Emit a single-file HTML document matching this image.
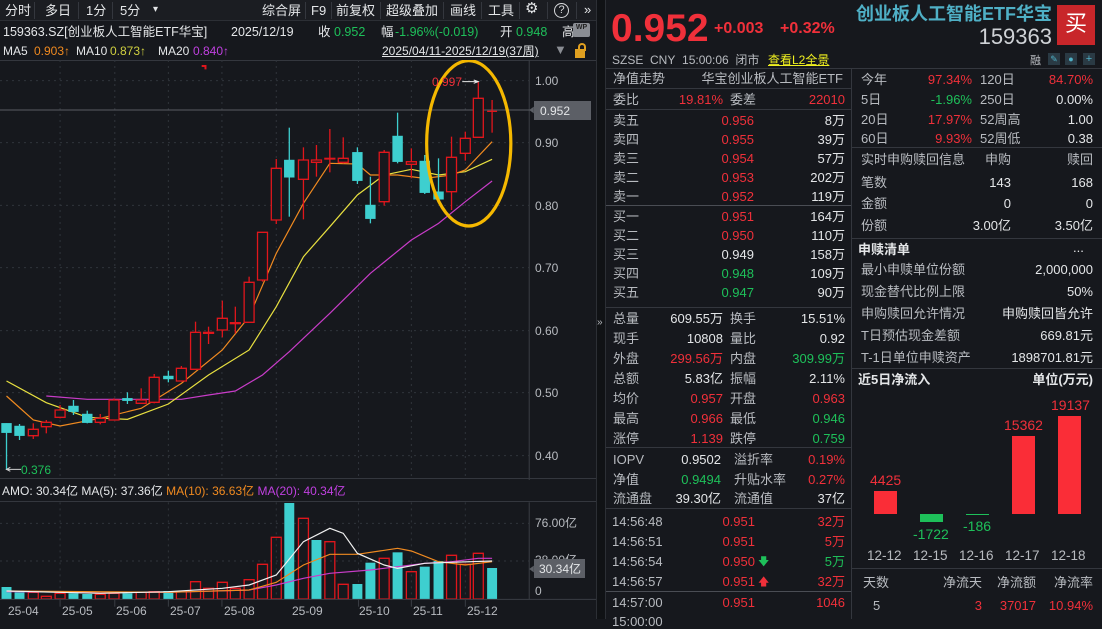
<!DOCTYPE html>
<html><head><meta charset="utf-8"><style>
*{margin:0;padding:0;box-sizing:border-box}
body{width:1102px;height:619px;background:#16181d;overflow:hidden;position:relative;font-family:"Liberation Sans","Noto Sans CJK SC",sans-serif;color:#d8dadd}
.t{position:absolute;white-space:nowrap;font-size:13px;line-height:14px}
.r{color:#f0303a}.g{color:#1ec05a}.w{color:#e4e6e8}.gy{color:#b8bbc0}
.hl{position:absolute;height:1px;background:#34373e}
.vl{position:absolute;width:1px;background:#34373e}
</style></head><body>
<!-- top toolbar -->
<div style="position:absolute;left:0;top:0;width:600px;height:21px;background:#1b1d22;border-bottom:1px solid #2c2f35"></div>
<div class="t w" style="left:5px;top:4px">分时</div>
<div class="vl" style="left:34px;top:2px;height:17px"></div>
<div class="t w" style="left:45px;top:4px">多日</div>
<div class="vl" style="left:78px;top:2px;height:17px"></div>
<div class="t w" style="left:86px;top:4px">1分</div>
<div class="vl" style="left:112px;top:2px;height:17px"></div>
<div class="t w" style="left:120px;top:4px">5分</div>
<div class="t w" style="left:153px;top:3px;font-size:10px">▾</div>
<div class="t w" style="left:262px;top:4px">综合屏</div>
<div class="vl" style="left:305px;top:2px;height:17px"></div>
<div class="t w" style="left:311px;top:4px">F9</div>
<div class="vl" style="left:331px;top:2px;height:17px"></div>
<div class="t w" style="left:336px;top:4px">前复权</div>
<div class="vl" style="left:380px;top:2px;height:17px"></div>
<div class="t w" style="left:386px;top:4px">超级叠加</div>
<div class="vl" style="left:443px;top:2px;height:17px"></div>
<div class="t w" style="left:450px;top:4px">画线</div>
<div class="vl" style="left:481px;top:2px;height:17px"></div>
<div class="t w" style="left:488px;top:4px">工具</div>
<div class="vl" style="left:519px;top:2px;height:17px"></div>
<div class="t w" style="left:525px;top:2px;font-size:15px">⚙</div>
<div class="vl" style="left:547px;top:2px;height:17px"></div>
<div style="position:absolute;left:554px;top:3px;width:15px;height:15px;border:1.3px solid #d8dadd;border-radius:50%;font-size:11px;text-align:center;line-height:13px">?</div>
<div class="vl" style="left:576px;top:2px;height:17px"></div>
<div class="t w" style="left:584px;top:3px">»</div>
<!-- row 2 -->
<div class="t w" style="left:3px;top:25px;font-size:12.5px">159363.SZ[创业板人工智能ETF华宝]</div>
<div class="t w" style="left:231px;top:25px;font-size:12.5px">2025/12/19</div>
<div class="t w" style="left:318px;top:25px;font-size:12.5px">收</div>
<div class="t g" style="left:334px;top:25px;font-size:12.5px">0.952</div>
<div class="t w" style="left:381px;top:25px;font-size:12.5px">幅</div>
<div class="t g" style="left:395px;top:25px;font-size:12.5px">-1.96%(-0.019)</div>
<div class="t w" style="left:500px;top:25px;font-size:12.5px">开</div>
<div class="t g" style="left:516px;top:25px;font-size:12.5px">0.948</div>
<div class="t w" style="left:562px;top:25px;font-size:12.5px">高</div>
<div style="position:absolute;left:573px;top:23px;width:17px;height:14px;background:#8a8d93;border-radius:2px;font-size:7px;color:#222;text-align:center;line-height:10px;font-weight:bold">WP</div>
<!-- row 3 -->
<div class="t w" style="left:3px;top:44px;font-size:12px">MA5</div>
<div class="t" style="left:34px;top:44px;font-size:12px;color:#f08a20">0.903↑</div>
<div class="t w" style="left:76px;top:44px;font-size:12px">MA10</div>
<div class="t" style="left:110px;top:44px;font-size:12px;color:#d0d040">0.873↑</div>
<div class="t w" style="left:158px;top:44px;font-size:12px">MA20</div>
<div class="t" style="left:193px;top:44px;font-size:12px;color:#c040e0">0.840↑</div>
<div class="t w" style="left:382px;top:44px;font-size:12px;text-decoration:underline">2025/04/11-2025/12/19(37周)</div>
<div class="t" style="left:554px;top:43px;font-size:13px;color:#8a8d93">▼</div>
<div style="position:absolute;left:575px;top:49px;width:10px;height:9px;background:#e0a020"></div>
<div style="position:absolute;left:578px;top:43px;width:8px;height:8px;border:2px solid #e0a020;border-bottom:none;border-radius:4px 4px 0 0"></div>
<div class="hl" style="left:0;top:60px;width:596px"></div>

<!-- main chart -->
<svg style="position:absolute;left:0;top:60px" width="600" height="420" viewBox="0 0 1568 1260" preserveAspectRatio="none">
<g stroke="#30343b" stroke-dasharray="2 4" vector-effect="non-scaling-stroke" stroke-width="1">
<line x1="0" x2="1383" y1="62" y2="62" vector-effect="non-scaling-stroke"/><line x1="0" x2="1383" y1="248" y2="248" vector-effect="non-scaling-stroke"/><line x1="0" x2="1383" y1="436" y2="436" vector-effect="non-scaling-stroke"/><line x1="0" x2="1383" y1="623" y2="623" vector-effect="non-scaling-stroke"/><line x1="0" x2="1383" y1="812" y2="812" vector-effect="non-scaling-stroke"/><line x1="0" x2="1383" y1="998" y2="998" vector-effect="non-scaling-stroke"/><line x1="0" x2="1383" y1="1187" y2="1187" vector-effect="non-scaling-stroke"/>
<line y1="0" y2="1260" x1="157" x2="157" vector-effect="non-scaling-stroke"/><line y1="0" y2="1260" x1="300" x2="300" vector-effect="non-scaling-stroke"/><line y1="0" y2="1260" x1="440" x2="440" vector-effect="non-scaling-stroke"/><line y1="0" y2="1260" x1="580" x2="580" vector-effect="non-scaling-stroke"/><line y1="0" y2="1260" x1="722" x2="722" vector-effect="non-scaling-stroke"/><line y1="0" y2="1260" x1="937" x2="937" vector-effect="non-scaling-stroke"/><line y1="0" y2="1260" x1="1075" x2="1075" vector-effect="non-scaling-stroke"/><line y1="0" y2="1260" x1="1216" x2="1216" vector-effect="non-scaling-stroke"/>
</g>
<line x1="1383" x2="1383" y1="0" y2="1260" stroke="#3a3d44" vector-effect="non-scaling-stroke"/>
<line x1="0" x2="1390" y1="150" y2="150" stroke="#5a5d63" vector-effect="non-scaling-stroke"/>
<g fill="none" stroke-width="1.2">
<polyline vector-effect="non-scaling-stroke" stroke="#c83cc8" points="121,1008 228,1018 403,1018 474,1018 545,1005 615,993 686,945 756,875 862,760 968,640 1075,540 1146,490 1216,425 1286,363"/>
<polyline vector-effect="non-scaling-stroke" stroke="#e8e040" points="17,963 121,1028 228,1072 333,1078 440,1032 545,945 651,870 722,740 793,590 862,500 934,405 1004,345 1075,328 1146,345 1216,335 1286,298"/>
<polyline vector-effect="non-scaling-stroke" stroke="#f08a20" points="17,1008 87,1080 157,1098 262,1075 369,1045 474,970 581,870 651,770 722,580 793,430 862,310 934,312 968,345 1039,345 1110,355 1180,345 1216,330 1286,245"/>
</g>
<g stroke-width="1.3">
<!-- candles: wick then body -->
<g stroke="#3ecfcf" fill="#3ecfcf">
<line vector-effect="non-scaling-stroke" x1="17" x2="17" y1="1090" y2="1230"/><rect x="4" y="1090" width="26" height="28"/>
<line vector-effect="non-scaling-stroke" x1="51" x2="51" y1="1092" y2="1140"/><rect x="38" y="1098" width="26" height="29"/>
<line vector-effect="non-scaling-stroke" x1="192" x2="192" y1="1020" y2="1065"/><rect x="179" y="1038" width="26" height="17"/>
<line vector-effect="non-scaling-stroke" x1="228" x2="228" y1="1052" y2="1090"/><rect x="215" y="1062" width="26" height="26"/>
<line vector-effect="non-scaling-stroke" x1="333" x2="333" y1="997" y2="1032"/><rect x="320" y="1015" width="26" height="7"/>
<line vector-effect="non-scaling-stroke" x1="440" x2="440" y1="932" y2="967"/><rect x="427" y="948" width="26" height="9"/>
<line vector-effect="non-scaling-stroke" x1="756" x2="756" y1="203" y2="470"/><rect x="743" y="300" width="26" height="52"/>
<line vector-effect="non-scaling-stroke" x1="934" x2="934" y1="262" y2="372"/><rect x="921" y="277" width="26" height="85"/>
<line vector-effect="non-scaling-stroke" x1="968" x2="968" y1="350" y2="490"/><rect x="955" y="435" width="26" height="41"/>
<line vector-effect="non-scaling-stroke" x1="1039" x2="1039" y1="158" y2="310"/><rect x="1026" y="228" width="26" height="77"/>
<line vector-effect="non-scaling-stroke" x1="1110" x2="1110" y1="285" y2="402"/><rect x="1097" y="303" width="26" height="95"/>
<line vector-effect="non-scaling-stroke" x1="1146" x2="1146" y1="295" y2="420"/><rect x="1133" y="395" width="26" height="23"/>
</g>
<g stroke="#e0161c" fill="#16181d">
<line vector-effect="non-scaling-stroke" x1="87" x2="87" y1="1090" y2="1137"/><rect vector-effect="non-scaling-stroke" x="74" y="1108" width="26" height="19"/>
<line vector-effect="non-scaling-stroke" x1="121" x2="121" y1="1080" y2="1120"/><rect vector-effect="non-scaling-stroke" x="108" y="1087" width="26" height="13"/>
<line vector-effect="non-scaling-stroke" x1="157" x2="157" y1="1035" y2="1075"/><rect vector-effect="non-scaling-stroke" x="144" y="1050" width="26" height="22"/>
<line vector-effect="non-scaling-stroke" x1="262" x2="262" y1="1062" y2="1093"/><rect vector-effect="non-scaling-stroke" x="249" y="1075" width="26" height="12"/>
<line vector-effect="non-scaling-stroke" x1="298" x2="298" y1="1015" y2="1080"/><rect vector-effect="non-scaling-stroke" x="285" y="1020" width="26" height="60"/>
<line vector-effect="non-scaling-stroke" x1="369" x2="369" y1="985" y2="1032"/><rect vector-effect="non-scaling-stroke" x="356" y="1020" width="26" height="10"/>
<line vector-effect="non-scaling-stroke" x1="403" x2="403" y1="942" y2="1030"/><rect vector-effect="non-scaling-stroke" x="390" y="952" width="26" height="75"/>
<line vector-effect="non-scaling-stroke" x1="474" x2="474" y1="918" y2="965"/><rect vector-effect="non-scaling-stroke" x="461" y="925" width="26" height="38"/>
<line vector-effect="non-scaling-stroke" x1="511" x2="511" y1="785" y2="930"/><rect vector-effect="non-scaling-stroke" x="498" y="817" width="26" height="111"/>
<line vector-effect="non-scaling-stroke" x1="545" x2="545" y1="800" y2="852"/><rect vector-effect="non-scaling-stroke" x="532" y="817" width="26" height="3"/>
<line vector-effect="non-scaling-stroke" x1="581" x2="581" y1="722" y2="832"/><rect vector-effect="non-scaling-stroke" x="568" y="775" width="26" height="35"/>
<line vector-effect="non-scaling-stroke" x1="615" x2="615" y1="740" y2="820"/><rect vector-effect="non-scaling-stroke" x="602" y="788" width="26" height="3"/>
<line vector-effect="non-scaling-stroke" x1="651" x2="651" y1="650" y2="787"/><rect vector-effect="non-scaling-stroke" x="638" y="667" width="26" height="120"/>
<line vector-effect="non-scaling-stroke" x1="686" x2="686" y1="517" y2="665"/><rect vector-effect="non-scaling-stroke" x="673" y="517" width="26" height="143"/>
<line vector-effect="non-scaling-stroke" x1="722" x2="722" y1="297" y2="492"/><rect vector-effect="non-scaling-stroke" x="709" y="325" width="26" height="155"/>
<line vector-effect="non-scaling-stroke" x1="793" x2="793" y1="262" y2="478"/><rect vector-effect="non-scaling-stroke" x="780" y="300" width="26" height="58"/>
<line vector-effect="non-scaling-stroke" x1="827" x2="827" y1="255" y2="350"/><rect vector-effect="non-scaling-stroke" x="814" y="300" width="26" height="7"/>
<line vector-effect="non-scaling-stroke" x1="862" x2="862" y1="207" y2="337"/><rect vector-effect="non-scaling-stroke" x="849" y="295" width="26" height="2"/>
<line vector-effect="non-scaling-stroke" x1="897" x2="897" y1="232" y2="310"/><rect vector-effect="non-scaling-stroke" x="884" y="295" width="26" height="12"/>
<line vector-effect="non-scaling-stroke" x1="1004" x2="1004" y1="270" y2="437"/><rect vector-effect="non-scaling-stroke" x="991" y="277" width="26" height="148"/>
<line vector-effect="non-scaling-stroke" x1="1075" x2="1075" y1="265" y2="355"/><rect vector-effect="non-scaling-stroke" x="1062" y="305" width="26" height="8"/>
<line vector-effect="non-scaling-stroke" x1="1180" x2="1180" y1="230" y2="450"/><rect vector-effect="non-scaling-stroke" x="1167" y="292" width="26" height="103"/>
<line vector-effect="non-scaling-stroke" x1="1216" x2="1216" y1="215" y2="302"/><rect vector-effect="non-scaling-stroke" x="1203" y="235" width="26" height="45"/>
<line vector-effect="non-scaling-stroke" x1="1250" x2="1250" y1="65" y2="232"/><rect vector-effect="non-scaling-stroke" x="1237" y="115" width="26" height="117"/>
<line vector-effect="non-scaling-stroke" x1="1286" x2="1286" y1="120" y2="218"/><line vector-effect="non-scaling-stroke" x1="1273" x2="1299" y1="154" y2="154"/>
</g>
</g>
<ellipse cx="1225" cy="250" rx="110" ry="248" fill="none" stroke="#f5b800" stroke-width="3.2" vector-effect="non-scaling-stroke"/>
<path d="M1208 65 H1250 M1238 60 L1250 65 L1238 70" stroke="#e8e8e8" fill="none" vector-effect="non-scaling-stroke"/>
<path d="M17 1228 H55 M27 1222 L17 1228 L27 1234" stroke="#d0d0d0" fill="none" vector-effect="non-scaling-stroke"/>
<path d="M527 18 H537 V28" stroke="#e0161c" fill="none" stroke-width="2" vector-effect="non-scaling-stroke"/>
<polygon points="1383,150 1395,140 1395,160" fill="#5c5f66"/>
</svg>
<div class="t r" style="left:432px;top:75px;font-size:12px">0.997</div>
<div class="t g" style="left:21px;top:463px;font-size:12px">0.376</div>
<div style="position:absolute;left:534px;top:101px;width:57px;height:19px;background:#5c5f66"></div>
<div class="t w" style="left:540px;top:104px;font-size:12px">0.952</div>
<div class="t gy" style="left:535px;top:74px;font-size:12px">1.00</div>
<div class="t gy" style="left:535px;top:136px;font-size:12px">0.90</div>
<div class="t gy" style="left:535px;top:199px;font-size:12px">0.80</div>
<div class="t gy" style="left:535px;top:261px;font-size:12px">0.70</div>
<div class="t gy" style="left:535px;top:324px;font-size:12px">0.60</div>
<div class="t gy" style="left:535px;top:386px;font-size:12px">0.50</div>
<div class="t gy" style="left:535px;top:449px;font-size:12px">0.40</div>

<!-- volume -->
<div class="hl" style="left:0;top:478px;width:596px"></div>
<div class="t w" style="left:2px;top:484px;font-size:12px">AMO: 30.34亿 MA(5): 37.36亿 <span style="color:#f08a20">MA(10): 36.63亿</span> <span style="color:#c040e0">MA(20): 40.34亿</span></div>
<div class="hl" style="left:0;top:501px;width:596px"></div>
<svg style="position:absolute;left:0;top:475px" width="600" height="144" viewBox="0 0 1568 432" preserveAspectRatio="none">
<g stroke="#30343b" stroke-dasharray="2 4">
<line vector-effect="non-scaling-stroke" x1="0" x2="1383" y1="145" y2="145"/><line vector-effect="non-scaling-stroke" x1="0" x2="1383" y1="258" y2="258"/>
<line vector-effect="non-scaling-stroke" y1="82" y2="372" x1="157" x2="157"/><line vector-effect="non-scaling-stroke" y1="82" y2="372" x1="440" x2="440"/><line vector-effect="non-scaling-stroke" y1="82" y2="372" x1="722" x2="722"/><line vector-effect="non-scaling-stroke" y1="82" y2="372" x1="937" x2="937"/><line vector-effect="non-scaling-stroke" y1="82" y2="372" x1="1075" x2="1075"/><line vector-effect="non-scaling-stroke" y1="82" y2="372" x1="1216" x2="1216"/>
</g>
<line x1="1383" x2="1383" y1="82" y2="372" stroke="#3a3d44" vector-effect="non-scaling-stroke"/>
<g fill="#3ecfcf">
<rect x="4" y="336" width="26" height="36"/><rect x="38" y="352" width="26" height="20"/><rect x="179" y="355" width="26" height="17"/><rect x="215" y="357" width="26" height="15"/><rect x="320" y="355" width="26" height="17"/><rect x="427" y="348" width="26" height="24"/><rect x="743" y="84" width="26" height="288"/><rect x="814" y="195" width="26" height="177"/><rect x="921" y="327" width="26" height="45"/><rect x="955" y="263" width="26" height="109"/><rect x="1026" y="232" width="26" height="140"/><rect x="1097" y="275" width="26" height="97"/><rect x="1133" y="258" width="26" height="114"/><rect x="1273" y="279" width="26" height="93"/>
</g>
<g fill="none" stroke="#e0161c" stroke-width="1.3">
<rect vector-effect="non-scaling-stroke" x="74" y="352" width="26" height="20"/><rect vector-effect="non-scaling-stroke" x="108" y="364" width="26" height="8"/><rect vector-effect="non-scaling-stroke" x="144" y="355" width="26" height="17"/><rect vector-effect="non-scaling-stroke" x="249" y="358" width="26" height="14"/><rect vector-effect="non-scaling-stroke" x="285" y="355" width="26" height="17"/><rect vector-effect="non-scaling-stroke" x="356" y="352" width="26" height="20"/><rect vector-effect="non-scaling-stroke" x="390" y="350" width="26" height="22"/><rect vector-effect="non-scaling-stroke" x="461" y="350" width="26" height="22"/><rect vector-effect="non-scaling-stroke" x="498" y="320" width="26" height="52"/><rect vector-effect="non-scaling-stroke" x="532" y="340" width="26" height="32"/><rect vector-effect="non-scaling-stroke" x="568" y="322" width="26" height="50"/><rect vector-effect="non-scaling-stroke" x="602" y="340" width="26" height="32"/><rect vector-effect="non-scaling-stroke" x="638" y="314" width="26" height="58"/><rect vector-effect="non-scaling-stroke" x="673" y="268" width="26" height="104"/><rect vector-effect="non-scaling-stroke" x="709" y="187" width="26" height="185"/><rect vector-effect="non-scaling-stroke" x="780" y="130" width="26" height="242"/><rect vector-effect="non-scaling-stroke" x="849" y="200" width="26" height="172"/><rect vector-effect="non-scaling-stroke" x="884" y="328" width="26" height="44"/><rect vector-effect="non-scaling-stroke" x="991" y="250" width="26" height="122"/><rect vector-effect="non-scaling-stroke" x="1062" y="290" width="26" height="82"/><rect vector-effect="non-scaling-stroke" x="1167" y="241" width="26" height="131"/><rect vector-effect="non-scaling-stroke" x="1203" y="268" width="26" height="104"/><rect vector-effect="non-scaling-stroke" x="1237" y="235" width="26" height="137"/>
</g>
<g fill="none" stroke-width="1.2">
<polyline vector-effect="non-scaling-stroke" stroke="#c83cc8" points="17,350 440,352 651,345 722,330 793,310 862,295 968,285 1039,275 1110,265 1180,260 1250,250 1286,250"/>
<polyline vector-effect="non-scaling-stroke" stroke="#f08a20" points="17,348 440,352 651,345 722,322 793,270 862,238 934,238 1039,220 1075,228 1146,260 1216,270 1286,260"/>
<polyline vector-effect="non-scaling-stroke" stroke="#f0f0f0" points="17,348 262,355 440,350 581,340 651,330 722,300 793,200 862,160 897,175 934,235 1004,270 1039,280 1110,265 1180,262 1286,258"/>
</g>
<line x1="0" x2="1568" y1="373" y2="373" stroke="#3a3d44" vector-effect="non-scaling-stroke"/>
<g stroke="#3a3d44"><line vector-effect="non-scaling-stroke" x1="157" x2="157" y1="373" y2="395"/><line vector-effect="non-scaling-stroke" x1="300" x2="300" y1="373" y2="395"/><line vector-effect="non-scaling-stroke" x1="440" x2="440" y1="373" y2="395"/><line vector-effect="non-scaling-stroke" x1="580" x2="580" y1="373" y2="395"/><line vector-effect="non-scaling-stroke" x1="937" x2="937" y1="373" y2="395"/><line vector-effect="non-scaling-stroke" x1="1075" x2="1075" y1="373" y2="395"/><line vector-effect="non-scaling-stroke" x1="1216" x2="1216" y1="373" y2="395"/></g>
<polygon points="1383,282 1395,272 1395,292" fill="#5c5f66"/>
</svg>
<div class="t gy" style="left:535px;top:516px;font-size:12px">76.00亿</div>
<div class="t gy" style="left:535px;top:553px;font-size:12px">38.00亿</div>
<div style="position:absolute;left:534px;top:559px;width:51px;height:19px;background:#5c5f66"></div>
<div class="t w" style="left:539px;top:562px;font-size:12px">30.34亿</div>
<div class="t gy" style="left:535px;top:584px;font-size:12px">0</div>
<div class="t gy" style="left:8px;top:604px;font-size:12px">25-04</div>
<div class="t gy" style="left:62px;top:604px;font-size:12px">25-05</div>
<div class="t gy" style="left:116px;top:604px;font-size:12px">25-06</div>
<div class="t gy" style="left:170px;top:604px;font-size:12px">25-07</div>
<div class="t gy" style="left:224px;top:604px;font-size:12px">25-08</div>
<div class="t gy" style="left:292px;top:604px;font-size:12px">25-09</div>
<div class="t gy" style="left:359px;top:604px;font-size:12px">25-10</div>
<div class="t gy" style="left:413px;top:604px;font-size:12px">25-11</div>
<div class="t gy" style="left:467px;top:604px;font-size:12px">25-12</div>

<!-- divider -->
<div style="position:absolute;left:596px;top:0;width:10px;height:619px;background:#101215;border-left:1px solid #2c2f35;border-right:1px solid #2c2f35"></div>
<div class="t gy" style="left:597px;top:316px;font-size:10px">»</div>

<!-- right header -->
<div class="t r" style="left:611px;top:9px;font-size:39px;line-height:40px;font-weight:bold">0.952</div>
<div class="t r" style="left:714px;top:20px;font-size:16px;line-height:18px;font-weight:bold">+0.003</div>
<div class="t r" style="left:780px;top:20px;font-size:16px;line-height:18px;font-weight:bold">+0.32%</div>
<div class="t" style="right:50px;top:4px;font-size:18px;line-height:20px;font-weight:bold;color:#4fb0c6">创业板人工智能ETF华宝</div>
<div class="t" style="right:50px;top:26px;font-size:22px;line-height:22px;color:#cfd2d6">159363</div>
<div style="position:absolute;left:1057px;top:5px;width:38px;height:40px;background:#c8262a;color:#fff;font-size:22px;text-align:center;line-height:38px">买</div>
<div class="t gy" style="left:612px;top:53px;font-size:12px">SZSE&nbsp;&nbsp;CNY&nbsp;&nbsp;15:00:06&nbsp;&nbsp;闭市</div>
<div class="t" style="left:768px;top:53px;font-size:12px;color:#f0f020;text-decoration:underline">查看L2全景</div>
<div class="t gy" style="left:1030px;top:54px;font-size:11px">融</div>
<div style="position:absolute;left:1048px;top:53px;width:12px;height:12px;background:#2a3a44;color:#4fb0c6;font-size:9px;text-align:center;line-height:12px">✎</div>
<div style="position:absolute;left:1065px;top:53px;width:12px;height:12px;background:#2a3a44;color:#4fb0c6;font-size:9px;text-align:center;line-height:12px">●</div>
<div style="position:absolute;left:1083px;top:53px;width:12px;height:12px;background:#2a3a44;color:#4fb0c6;font-size:11px;text-align:center;line-height:12px">+</div>
<div class="hl" style="left:606px;top:68px;width:496px"></div>
<div class="vl" style="left:851px;top:68px;height:551px"></div>

<!-- col2 -->
<div class="t gy" style="left:613px;top:72px">净值走势</div>
<div class="t gy" style="right:259px;top:72px">华宝创业板人工智能ETF</div>
<div class="hl" style="left:606px;top:88px;width:245px"></div>
<div class="t gy" style="left:613px;top:93px">委比</div>
<div class="t r" style="right:379px;top:93px">19.81%</div>
<div class="t gy" style="left:730px;top:93px">委差</div>
<div class="t r" style="right:257px;top:93px">22010</div>
<div class="hl" style="left:606px;top:109px;width:245px"></div>
<div class="t gy" style="left:613px;top:114px">卖五</div><div class="t r" style="right:348px;top:114px">0.956</div><div class="t w" style="right:257px;top:114px">8万</div>
<div class="t gy" style="left:613px;top:133px">卖四</div><div class="t r" style="right:348px;top:133px">0.955</div><div class="t w" style="right:257px;top:133px">39万</div>
<div class="t gy" style="left:613px;top:152px">卖三</div><div class="t r" style="right:348px;top:152px">0.954</div><div class="t w" style="right:257px;top:152px">57万</div>
<div class="t gy" style="left:613px;top:171px">卖二</div><div class="t r" style="right:348px;top:171px">0.953</div><div class="t w" style="right:257px;top:171px">202万</div>
<div class="t gy" style="left:613px;top:190px">卖一</div><div class="t r" style="right:348px;top:190px">0.952</div><div class="t w" style="right:257px;top:190px">119万</div>
<div class="hl" style="left:606px;top:205px;width:245px;background:#4a4d54"></div>
<div class="t gy" style="left:613px;top:210px">买一</div><div class="t r" style="right:348px;top:210px">0.951</div><div class="t w" style="right:257px;top:210px">164万</div>
<div class="t gy" style="left:613px;top:229px">买二</div><div class="t r" style="right:348px;top:229px">0.950</div><div class="t w" style="right:257px;top:229px">110万</div>
<div class="t gy" style="left:613px;top:248px">买三</div><div class="t w" style="right:348px;top:248px">0.949</div><div class="t w" style="right:257px;top:248px">158万</div>
<div class="t gy" style="left:613px;top:267px">买四</div><div class="t g" style="right:348px;top:267px">0.948</div><div class="t w" style="right:257px;top:267px">109万</div>
<div class="t gy" style="left:613px;top:286px">买五</div><div class="t g" style="right:348px;top:286px">0.947</div><div class="t w" style="right:257px;top:286px">90万</div>
<div class="hl" style="left:606px;top:307px;width:245px"></div>
<div class="t gy" style="left:613px;top:312px">总量</div><div class="t w" style="right:379px;top:312px">609.55万</div><div class="t gy" style="left:730px;top:312px">换手</div><div class="t w" style="right:257px;top:312px">15.51%</div>
<div class="t gy" style="left:613px;top:332px">现手</div><div class="t w" style="right:379px;top:332px">10808</div><div class="t gy" style="left:730px;top:332px">量比</div><div class="t w" style="right:257px;top:332px">0.92</div>
<div class="t gy" style="left:613px;top:352px">外盘</div><div class="t r" style="right:379px;top:352px">299.56万</div><div class="t gy" style="left:730px;top:352px">内盘</div><div class="t g" style="right:257px;top:352px">309.99万</div>
<div class="t gy" style="left:613px;top:372px">总额</div><div class="t w" style="right:379px;top:372px">5.83亿</div><div class="t gy" style="left:730px;top:372px">振幅</div><div class="t w" style="right:257px;top:372px">2.11%</div>
<div class="t gy" style="left:613px;top:392px">均价</div><div class="t r" style="right:379px;top:392px">0.957</div><div class="t gy" style="left:730px;top:392px">开盘</div><div class="t r" style="right:257px;top:392px">0.963</div>
<div class="t gy" style="left:613px;top:412px">最高</div><div class="t r" style="right:379px;top:412px">0.966</div><div class="t gy" style="left:730px;top:412px">最低</div><div class="t g" style="right:257px;top:412px">0.946</div>
<div class="t gy" style="left:613px;top:432px">涨停</div><div class="t r" style="right:379px;top:432px">1.139</div><div class="t gy" style="left:730px;top:432px">跌停</div><div class="t g" style="right:257px;top:432px">0.759</div>
<div class="hl" style="left:606px;top:447px;width:245px"></div>
<div class="t gy" style="left:613px;top:453px">IOPV</div><div class="t w" style="right:381px;top:453px">0.9502</div><div class="t gy" style="left:734px;top:453px">溢折率</div><div class="t r" style="right:257px;top:453px">0.19%</div>
<div class="t gy" style="left:613px;top:473px">净值</div><div class="t g" style="right:381px;top:473px">0.9494</div><div class="t gy" style="left:734px;top:473px">升贴水率</div><div class="t r" style="right:257px;top:473px">0.27%</div>
<div class="t gy" style="left:613px;top:492px">流通盘</div><div class="t w" style="right:381px;top:492px">39.30亿</div><div class="t gy" style="left:734px;top:492px">流通值</div><div class="t w" style="right:257px;top:492px">37亿</div>
<div class="hl" style="left:606px;top:508px;width:245px"></div>
<div class="t gy" style="left:612px;top:515px">14:56:48</div><div class="t r" style="right:347px;top:515px">0.951</div><div class="t r" style="right:257px;top:515px">32万</div>
<div class="t gy" style="left:612px;top:535px">14:56:51</div><div class="t r" style="right:347px;top:535px">0.951</div><div class="t r" style="right:257px;top:535px">5万</div>
<div class="t gy" style="left:612px;top:555px">14:56:54</div><div class="t r" style="right:347px;top:555px">0.950</div><div class="t g" style="left:758px;top:555px;font-size:11px">🡇</div><div class="t g" style="right:257px;top:555px">5万</div>
<div class="t gy" style="left:612px;top:575px">14:56:57</div><div class="t r" style="right:347px;top:575px">0.951</div><div class="t r" style="left:758px;top:575px;font-size:11px">🡅</div><div class="t r" style="right:257px;top:575px">32万</div>
<div class="hl" style="left:606px;top:591px;width:245px;background:#4a4d54"></div>
<div class="t gy" style="left:612px;top:596px">14:57:00</div><div class="t r" style="right:347px;top:596px">0.951</div><div class="t r" style="right:257px;top:596px">1046</div>
<div class="t gy" style="left:612px;top:615px">15:00:00</div>

<!-- col3 -->
<div class="t gy" style="left:861px;top:73px">今年</div><div class="t r" style="right:130px;top:73px">97.34%</div><div class="t gy" style="left:980px;top:73px">120日</div><div class="t r" style="right:9px;top:73px">84.70%</div>
<div class="t gy" style="left:861px;top:93px">5日</div><div class="t g" style="right:130px;top:93px">-1.96%</div><div class="t gy" style="left:980px;top:93px">250日</div><div class="t w" style="right:9px;top:93px">0.00%</div>
<div class="t gy" style="left:861px;top:113px">20日</div><div class="t r" style="right:130px;top:113px">17.97%</div><div class="t gy" style="left:980px;top:113px">52周高</div><div class="t w" style="right:9px;top:113px">1.00</div>
<div class="t gy" style="left:861px;top:132px">60日</div><div class="t r" style="right:130px;top:132px">9.93%</div><div class="t gy" style="left:980px;top:132px">52周低</div><div class="t w" style="right:9px;top:132px">0.38</div>
<div class="hl" style="left:852px;top:147px;width:250px"></div>
<div class="t gy" style="left:861px;top:153px">实时申购赎回信息</div><div class="t gy" style="right:91px;top:153px">申购</div><div class="t gy" style="right:9px;top:153px">赎回</div>
<div class="t gy" style="left:861px;top:176px">笔数</div><div class="t w" style="right:91px;top:176px">143</div><div class="t w" style="right:9px;top:176px">168</div>
<div class="t gy" style="left:861px;top:197px">金额</div><div class="t w" style="right:91px;top:197px">0</div><div class="t w" style="right:9px;top:197px">0</div>
<div class="t gy" style="left:861px;top:219px">份额</div><div class="t w" style="right:91px;top:219px">3.00亿</div><div class="t w" style="right:9px;top:219px">3.50亿</div>
<div class="hl" style="left:852px;top:238px;width:250px"></div>
<div class="t w" style="left:858px;top:243px;font-weight:bold">申赎清单</div><div class="t w" style="left:1073px;top:241px">...</div>
<div class="t gy" style="left:861px;top:263px">最小申赎单位份额</div><div class="t w" style="right:9px;top:263px">2,000,000</div>
<div class="t gy" style="left:861px;top:285px">现金替代比例上限</div><div class="t w" style="right:9px;top:285px">50%</div>
<div class="t gy" style="left:861px;top:307px">申购赎回允许情况</div><div class="t w" style="right:9px;top:307px">申购赎回皆允许</div>
<div class="t gy" style="left:861px;top:329px">T日预估现金差额</div><div class="t w" style="right:9px;top:329px">669.81元</div>
<div class="t gy" style="left:861px;top:351px">T-1日单位申赎资产</div><div class="t w" style="right:9px;top:351px">1898701.81元</div>
<div class="hl" style="left:852px;top:368px;width:250px"></div>
<div class="t w" style="left:858px;top:373px;font-weight:bold">近5日净流入</div><div class="t w" style="right:9px;top:373px;font-weight:bold">单位(万元)</div>
<div style="position:absolute;left:874px;top:491px;width:23px;height:23px;background:#fa2d37"></div>
<div style="position:absolute;left:920px;top:514px;width:23px;height:8px;background:#1ec05a"></div>
<div style="position:absolute;left:966px;top:514px;width:23px;height:1px;background:#1ec05a"></div>
<div style="position:absolute;left:1012px;top:436px;width:23px;height:78px;background:#fa2d37"></div>
<div style="position:absolute;left:1058px;top:416px;width:23px;height:98px;background:#fa2d37"></div>
<div class="t r" style="left:870px;top:473px;font-size:14px">4425</div>
<div class="t g" style="left:913px;top:527px;font-size:14px">-1722</div>
<div class="t g" style="left:963px;top:519px;font-size:14px">-186</div>
<div class="t r" style="left:1004px;top:418px;font-size:14px">15362</div>
<div class="t r" style="left:1051px;top:398px;font-size:14px">19137</div>
<div class="t gy" style="left:867px;top:549px;font-size:13.5px">12-12</div>
<div class="t gy" style="left:913px;top:549px;font-size:13.5px">12-15</div>
<div class="t gy" style="left:959px;top:549px;font-size:13.5px">12-16</div>
<div class="t gy" style="left:1005px;top:549px;font-size:13.5px">12-17</div>
<div class="t gy" style="left:1051px;top:549px;font-size:13.5px">12-18</div>
<div class="hl" style="left:852px;top:568px;width:250px"></div>
<div class="t gy" style="left:863px;top:576px">天数</div><div class="t gy" style="right:120px;top:576px">净流天</div><div class="t gy" style="right:66px;top:576px">净流额</div><div class="t gy" style="right:9px;top:576px">净流率</div>
<div class="t gy" style="left:873px;top:599px">5</div><div class="t r" style="right:120px;top:599px">3</div><div class="t r" style="right:66px;top:599px">37017</div><div class="t r" style="right:9px;top:599px">10.94%</div>
</body></html>
